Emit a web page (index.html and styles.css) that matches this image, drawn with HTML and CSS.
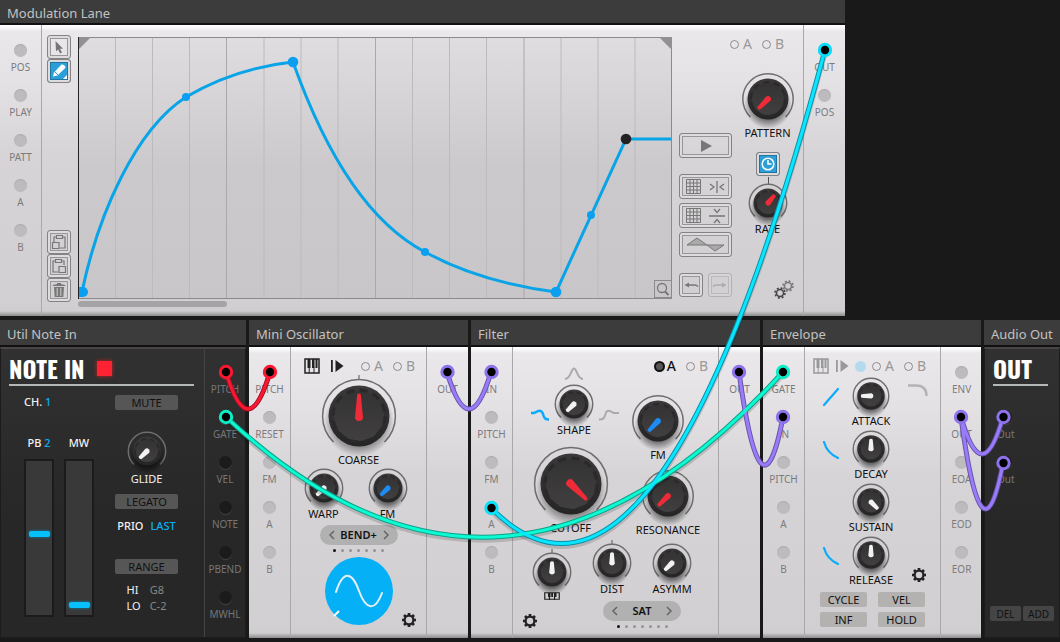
FILE: index.html
```html
<!DOCTYPE html>
<html lang="en">
<head>
<meta charset="utf-8">
<title>Modular Rack</title>
<link rel="stylesheet" href="styles.css">
</head>
<body>
<svg class="defs" aria-hidden="true">
  <defs>
    <linearGradient id="cap" x1="0" y1="0" x2="0" y2="1"><stop offset="0" stop-color="#3b3939"/><stop offset="1" stop-color="#262525"/></linearGradient>
    <linearGradient id="face" x1="0" y1="0" x2="0" y2="1"><stop offset="0" stop-color="#343333"/><stop offset="1" stop-color="#413f3f"/></linearGradient>
    <radialGradient id="shade"><stop offset="0.6" stop-color="#000" stop-opacity="0.5"/><stop offset="1" stop-color="#000" stop-opacity="0"/></radialGradient>
    <g id="dial-l">
      <path class="ring" d="M-25.500 26A36.400 36.400 0 1 1 25.500 26"/>
      <circle cy="6" r="35" fill="url(#shade)"/>
      <circle r="30.500" fill="url(#cap)"/>
      <circle r="25" fill="url(#face)"/>
      <circle r="26" fill="none" stroke="#2a2929" stroke-width="3" stroke-dasharray="8 5.600"/>
    </g>
    <g id="dial-m">
      <path class="ring" d="M-17.500 18A25.200 25.200 0 1 1 17.500 18"/>
      <circle cy="6" r="24" fill="url(#shade)"/>
      <circle r="20.500" fill="url(#cap)"/>
      <circle r="16" fill="url(#face)"/>
      <circle r="17" fill="none" stroke="#2a2929" stroke-width="2" stroke-dasharray="6 4.680"/>
    </g>
    <g id="dial-s">
      <path class="ring" d="M-13 13.500A18.700 18.700 0 1 1 13 13.500"/>
      <circle cy="5" r="18" fill="url(#shade)"/>
      <circle r="14.500" fill="url(#cap)"/>
      <circle r="11" fill="url(#face)"/>
      <circle r="12" fill="none" stroke="#2a2929" stroke-width="1.500" stroke-dasharray="5 3.380"/>
    </g>
    <path id="hand-l" d="M-1.800 -21.500Q0 -23.500 1.800 -21.500L4 2Q3.500 5 0 5Q-3.500 5 -4 2Z"/>
    <path id="hand-m" d="M-1.800 -13.500Q0 -15 1.800 -13.500L3 0.500Q2.500 3 0 3Q-2.500 3 -3 0.500Z"/>
    <path id="hand-s" d="M-1.800 -10Q0 -11.500 1.800 -10L2.800 0.500Q2 2.500 0 2.500Q-2 2.500 -2.800 0.500Z"/>
    <symbol id="keys" viewBox="0 0 16 16"><path d="M1 1H15V15H1Z" fill="none" stroke="currentColor" stroke-width="1.500"/><path d="M3.500 1H6.500V10H3.500ZM8 1H10.500V10H8ZM11.500 1H13.500V10H11.500Z" fill="currentColor"/><path d="M5.200 9V15M10 9V15" stroke="currentColor"/></symbol>
    <symbol id="keys-low" viewBox="0 0 16 8"><path d="M.75 .75H15.250V7.250H.75ZM5.500 4V8M10.500 4V8" fill="none" stroke="#222" stroke-width="1.200"/><path d="M4 1H6.500V5H4ZM7.200 1H9V5H7.200ZM10 1H12.500V5H10Z" fill="#222"/></symbol>
    <symbol id="step" viewBox="0 0 14 14"><path d="M1 1H2.800V13H1ZM5.500 1L13.500 7L5.500 13Z" fill="currentColor"/></symbol>
    <symbol id="gear" viewBox="-8 -8 16 16"><circle r="4.400" fill="none" stroke="currentColor" stroke-width="2.300"/><path d="M0 -7V-5M0 7V5M-7 0H-5M7 0H5M-5 -5L-3.600 -3.600M5 5L3.600 3.600M-5 5L-3.600 3.600M5 -5L3.600 -3.600" stroke="currentColor" stroke-width="2.700"/></symbol>
    <symbol id="grid" viewBox="0 0 15 15"><path d="M.5 .5H14.500V14.500H.5ZM4 0V15M7.500 0V15M11 0V15M0 4H15M0 7.500H15M0 11H15" fill="none" stroke="#777"/></symbol>
    <symbol id="fall" viewBox="0 0 18 18"><path d="M2 1Q5 12 16 17" fill="none" stroke="#0aabfc" stroke-width="2.200" stroke-linecap="round"/></symbol>
  </defs>
</svg>

<main class="rack">
  <div class="row row-top">
    <section class="module">
      <h2 class="title">Modulation Lane</h2>
      <div class="panel">
        <div class="ports">
          <button class="port"><i></i>POS</button><button class="port"><i></i>PLAY</button><button class="port"><i></i>PATT</button><button class="port"><i></i>A</button><button class="port"><i></i>B</button>
        </div>
        <div class="lane">
          <div class="tools">
            <button class="tool" aria-label="Select"><svg width="16" height="16" viewBox="0 0 16 16"><path d="M4.500 2L5 12.500L7.200 10.500L9 14.500L11 13.500L9 9.700H12Z" fill="#777"/></svg></button>
            <button class="tool on" aria-label="Draw"><svg width="18" height="18" viewBox="0 0 18 18"><path d="M3 14.500L4 10.500L11.500 2.500Q14.500 2 15.500 5.700L7.500 13.500Z" fill="#fff"/><path d="M4.500 9.500L8 13" stroke="#2b9fd8"/><path d="M17 13V17H13Z" fill="#fff"/></svg></button>
            <span class="spring"></span>
            <button class="tool" aria-label="Copy"><svg width="18" height="18" viewBox="0 0 18 18"><path d="M4 9V4H6M13 4H15V15H10M6.500 2.500H12.500V5.500H6.500ZM2.500 9.500H9V15.500H2.500Z" fill="none" stroke="#777" stroke-width="1.200"/></svg></button>
            <button class="tool" aria-label="Paste"><svg width="18" height="18" viewBox="0 0 18 18"><path d="M5 4H3V15H8M12 4H14V8M5.500 2.500H11.500V5.500H5.500ZM9 9.500H15.500V15.500H9Z" fill="none" stroke="#777" stroke-width="1.200"/></svg></button>
            <button class="tool" aria-label="Delete"><svg width="18" height="18" viewBox="0 0 18 18"><path d="M2.500 5Q3 3.500 7 3.300V2H11V3.300Q15 3.500 15.500 5ZM4 6H14L13.300 16H4.700Z" fill="#777"/><path d="M7.200 7V15M10.800 7V15" stroke="#d2d0d2"/></svg></button>
          </div>
          <div class="graph">
            <svg class="plot" viewBox="0 0 594 262" preserveAspectRatio="none">
              <path d="M37.500 0V261M74.500 0V261M111.500 0V261M186 0V261M223 0V261M260 0V261M334.500 0V261M371.500 0V261M408.500 0V261M483 0V261M520 0V261M557 0V261" stroke="#bcbabc"/>
              <path d="M148.500 0V261M297.500 0V261M446 0V261" stroke="#aaa8aa"/>
              <path d="M0 .5H594M593.500 0V261M0 261.500H594" stroke="#8c8b8c"/>
              <path d="M0 0H13L0 13ZM594 0H581L594 13Z" fill="#929192"/>
              <path d="M.5 0V262" stroke="#222"/>
              <g fill="none" stroke="#09a4e8" stroke-width="3">
                <path d="M4 255C20 178 57 93 108 60C142 40 177 29 215 25C247 115 290 185 347 215C389 238 432 249 478 255L548 102H593"/>
              </g>
              <path d="M1 250H5A5 5 0 0 1 5 260H1Z" fill="#0a9ff0"/>
              <g fill="#0a9ff0"><circle cx="108" cy="60" r="4"/><circle cx="215" cy="25" r="5.300"/><circle cx="347" cy="215" r="4"/><circle cx="478" cy="255" r="5.300"/><circle cx="513" cy="178" r="4"/></g>
              <circle cx="548" cy="102" r="5.300" fill="#222"/>
            </svg>
            <button class="zoom" aria-label="Zoom"><svg width="16" height="16" viewBox="0 0 16 16"><circle cx="7" cy="7" r="4.500" fill="none" stroke="#777" stroke-width="1.300"/><path d="M10 10.500L13.500 14" stroke="#777" stroke-width="2"/></svg></button>
            <div class="scroll"></div>
          </div>
          <div class="side">
            <div class="snap side-snap">
              <label><input type="radio" name="lane">A</label><label><input type="radio" name="lane">B</label>
            </div>
            <div class="actions">
              <button class="wide" aria-label="Play"><svg width="14" height="14" viewBox="0 0 14 14"><path d="M2 1L13 7L2 13Z" fill="#777"/></svg></button>
              <button class="wide" aria-label="Flip horizontally"><svg width="15" height="15"><use href="#grid"/></svg><svg width="18" height="16" viewBox="0 0 18 16"><path d="M2 5L6 8L2 11M16 5L12 8L16 11M9 2V14" fill="none" stroke="#777" stroke-width="1.300"/></svg></button>
              <button class="wide" aria-label="Flip vertically"><svg width="15" height="15"><use href="#grid"/></svg><svg width="18" height="16" viewBox="0 0 18 16"><path d="M6 1L9 4.500L12 1M6 15L9 11.500L12 15M1 8H17" fill="none" stroke="#777" stroke-width="1.300"/></svg></button>
              <button class="wide" aria-label="Invert shape"><svg width="42" height="18" viewBox="0 0 42 18"><path d="M2 9L12 2L22 9L30 15L39 9Z" fill="#aaa" stroke="#777"/></svg></button>
              <div class="history">
                <button class="tool" aria-label="Undo"><svg width="18" height="18" viewBox="0 0 18 18"><path d="M2.500 9L7 6.500V11.500Z" fill="#777"/><path d="M6 9H11Q14.500 8.500 16 10.500" fill="none" stroke="#777" stroke-width="1.500"/></svg></button>
                <button class="tool faint" aria-label="Redo"><svg width="18" height="18" viewBox="0 0 18 18"><path d="M15.500 9L11 6.500V11.500Z" fill="#777"/><path d="M12 9H7Q3.500 8.500 2 10.500" fill="none" stroke="#777" stroke-width="1.500"/></svg></button>
              </div>
            </div>
            <div class="dials">
              <label class="knob" style="--turn:-135deg"><svg class="dial" width="56" height="55" viewBox="-28 -28 56 55"><use href="#dial-m"/><use class="hand red" href="#hand-m"/></svg>PATTERN<input type="range"></label>
              <button class="tool on clock" aria-label="Clock sync"><svg width="18" height="18" viewBox="0 0 18 18"><circle cx="9" cy="9" r="5.800" fill="none" stroke="#fff" stroke-width="1.500"/><path d="M9 5V9H12.500" fill="none" stroke="#fff" stroke-width="1.500"/></svg></button>
              <label class="knob rate" style="--turn:40deg"><svg class="dial" width="44" height="40" viewBox="-22 -21 44 40"><path class="tick" d="M.5 -26V-19"/><use href="#dial-s"/><use class="hand red" href="#hand-s"/></svg>RATE<input type="range"></label>
              <span class="spring"></span>
              <svg class="gears" width="22" height="20" viewBox="0 0 22 20"><g fill="none" stroke="#777" stroke-width="1.500"><circle cx="15" cy="7" r="3.500"/><circle cx="15" cy="7" r="5" stroke-dasharray="2 1.927"/></g><g fill="none" stroke="#444" stroke-width="1.500"><circle cx="7" cy="14" r="3.500"/><circle cx="7" cy="14" r="5" stroke-dasharray="2 1.927"/></g></svg>
            </div>
          </div>
        </div>
        <div class="ports"><button class="port"><i></i>OUT</button><button class="port"><i></i>POS</button></div>
      </div>
    </section>
  </div>

  <div class="row row-bottom">
    <section class="module dark">
      <h2 class="title">Util Note In</h2>
      <div class="panel">
        <div class="note">
          <h3 class="brand">NOTE IN <i class="led"></i></h3>
          <div class="note-body">
            <div class="note-left">
              <p class="value">CH. <b>1</b></p>
              <div class="faders">
                <label class="fader"><span>PB <b>2</b></span><input type="range" min="0" max="100" value="53"></label>
                <label class="fader"><span>MW</span><input type="range" min="0" max="100" value="2"></label>
              </div>
            </div>
            <div class="note-right">
              <button class="flat">MUTE</button>
              <label class="knob glide" style="--turn:-135deg"><svg class="dial" width="44" height="40" viewBox="-22 -21 44 40"><use href="#dial-s"/><use class="hand white" href="#hand-s"/></svg>GLIDE<input type="range"></label>
              <button class="flat legato">LEGATO</button>
              <p class="value prio"><span>PRIO</span><b>LAST</b></p>
              <button class="flat">RANGE</button>
              <dl class="range"><dt>HI</dt><dd>G8</dd><dt>LO</dt><dd>C-2</dd></dl>
            </div>
          </div>
        </div>
        <div class="ports"><button class="port"><i></i>PITCH</button><button class="port"><i></i>GATE</button><button class="port"><i></i>VEL</button><button class="port"><i></i>NOTE</button><button class="port"><i></i>PBEND</button><button class="port"><i></i>MWHL</button></div>
      </div>
    </section>

    <section class="module">
      <h2 class="title">Mini Oscillator</h2>
      <div class="panel">
        <div class="ports"><button class="port"><i></i>PITCH</button><button class="port"><i></i>RESET</button><button class="port"><i></i>FM</button><button class="port"><i></i>A</button><button class="port"><i></i>B</button></div>
        <div class="body osc">
          <div class="modes">
            <svg width="16" height="16"><use href="#keys"/></svg><svg width="14" height="14"><use href="#step"/></svg>
            <div class="snap"><label><input type="radio" name="osc">A</label><label><input type="radio" name="osc">B</label></div>
          </div>
          <label class="knob" style="--turn:0deg"><svg class="dial" width="76" height="78" viewBox="-38 -41 76 78"><path class="tick" d="M0 -41V-36"/><use href="#dial-l"/><use class="hand red" href="#hand-l"/></svg>COARSE<input type="range"></label>
          <div class="pair">
            <label class="knob" style="--turn:-135deg"><svg class="dial" width="44" height="40" viewBox="-22 -21 44 40"><use href="#dial-s"/><use class="hand white" href="#hand-s"/></svg>WARP<input type="range"></label>
            <label class="knob" style="--turn:-135deg"><svg class="dial" width="44" height="40" viewBox="-22 -21 44 40"><use href="#dial-s"/><use class="hand blue" href="#hand-s"/></svg>FM<input type="range"></label>
          </div>
          <div class="pick">
            <button aria-label="Previous"><svg width="6" height="10" viewBox="0 0 6 10"><path d="M5 1L1 5L5 9"/></svg></button>BEND+<button aria-label="Next"><svg width="6" height="10" viewBox="0 0 6 10"><path d="M1 1L5 5L1 9"/></svg></button>
          </div>
          <div class="dots"><i class="now"></i><i></i><i></i><i></i><i></i><i></i><i></i></div>
          <div class="wave-row">
            <svg class="wave" width="68" height="68" viewBox="0 0 68 68"><circle cx="34" cy="34" r="34" fill="#05b0f7"/><path d="M11 35C18 13 27 14 34 34C41 53 50 55 57 36" fill="none" stroke="#e4f0f5" stroke-width="2" stroke-linecap="round"/><path d="M9 59L14 54" stroke="#fff" stroke-width="2"/></svg>
            <button class="cog" aria-label="Settings"><svg width="16" height="16"><use href="#gear"/></svg></button>
          </div>
        </div>
        <div class="ports"><button class="port"><i></i>OUT</button></div>
      </div>
    </section>

    <section class="module">
      <h2 class="title">Filter</h2>
      <div class="panel">
        <div class="ports"><button class="port"><i></i>IN</button><button class="port"><i></i>PITCH</button><button class="port"><i></i>FM</button><button class="port"><i></i>A</button><button class="port"><i></i>B</button></div>
        <div class="body filter">
          <div class="filter-top">
            <div class="filter-left">
              <div class="shape">
                <svg class="peak" width="20" height="13" viewBox="0 0 20 13"><path d="M1 12C7 12 7 1.500 10 1.500S13 12 19 12" fill="none" stroke="#aaa" stroke-width="2"/></svg>
                <svg class="curve" width="20" height="11" viewBox="0 0 20 11"><path d="M1 3H4C8 1 11 -1 13 4C14 8 15 9.500 19 9.500" fill="none" stroke="#0aabfc" stroke-width="2.500"/></svg>
                <label class="knob" style="--turn:-135deg"><svg class="dial" width="44" height="40" viewBox="-22 -21 44 40"><use href="#dial-s"/><use class="hand white" href="#hand-s"/></svg>SHAPE<input type="range"></label>
                <svg class="curve" width="22" height="11" viewBox="0 0 22 11"><path d="M1 9.500C6 9.500 6 8 7.500 4C9 -1 12 1 16 3H21" fill="none" stroke="#aaa" stroke-width="2"/></svg>
              </div>
              <label class="knob" style="--turn:135deg"><svg class="dial" width="76" height="78" viewBox="-38 -41 76 78"><use href="#dial-l"/><use class="hand red" href="#hand-l"/></svg>CUTOFF<input type="range"></label>
            </div>
            <div class="filter-right">
              <div class="snap"><label class="picked"><input type="radio" name="filter" checked>A</label><label><input type="radio" name="filter">B</label></div>
              <label class="knob fm" style="--turn:-137deg"><svg class="dial" width="56" height="55" viewBox="-28 -28 56 55"><use href="#dial-m"/><use class="hand blue" href="#hand-m"/></svg>FM<input type="range"></label>
              <label class="knob" style="--turn:-135deg"><svg class="dial" width="56" height="55" viewBox="-28 -28 56 55"><use href="#dial-m"/><use class="hand red" href="#hand-m"/></svg>RESONANCE<input type="range"></label>
            </div>
          </div>
          <div class="filter-low">
            <div class="track">
              <label class="knob" style="--turn:0deg"><svg class="dial" width="44" height="40" viewBox="-22 -21 44 40"><path class="tick" d="M0 -23V-19"/><use href="#dial-s"/><use class="hand white" href="#hand-s"/></svg><svg width="16" height="8"><use href="#keys-low"/></svg><input type="range" aria-label="Key tracking"></label>
              <button class="cog" aria-label="Settings"><svg width="16" height="16"><use href="#gear"/></svg></button>
            </div>
            <div class="drive">
              <div class="drive-pair">
                <label class="knob" style="--turn:0deg"><svg class="dial" width="44" height="40" viewBox="-22 -21 44 40"><path class="tick" d="M0 -23V-19"/><use href="#dial-s"/><use class="hand white" href="#hand-s"/></svg>DIST<input type="range"></label>
                <label class="knob" style="--turn:-135deg"><svg class="dial" width="44" height="40" viewBox="-22 -21 44 40"><use href="#dial-s"/><use class="hand white" href="#hand-s"/></svg>ASYMM<input type="range"></label>
              </div>
              <div class="pick"><button aria-label="Previous"><svg width="6" height="10" viewBox="0 0 6 10"><path d="M5 1L1 5L5 9"/></svg></button>SAT<button aria-label="Next"><svg width="6" height="10" viewBox="0 0 6 10"><path d="M1 1L5 5L1 9"/></svg></button></div>
              <div class="dots"><i class="now"></i><i></i><i></i><i></i><i></i><i></i><i></i></div>
            </div>
          </div>
        </div>
        <div class="ports"><button class="port"><i></i>OUT</button></div>
      </div>
    </section>

    <section class="module">
      <h2 class="title">Envelope</h2>
      <div class="panel">
        <div class="ports"><button class="port"><i></i>GATE</button><button class="port"><i></i>IN</button><button class="port"><i></i>PITCH</button><button class="port"><i></i>A</button><button class="port"><i></i>B</button></div>
        <div class="body env">
          <div class="modes off">
            <svg width="16" height="16"><use href="#keys"/></svg><svg width="14" height="14"><use href="#step"/></svg><i class="lamp"></i>
            <div class="snap"><label><input type="radio" name="env">A</label><label><input type="radio" name="env">B</label></div>
          </div>
          <div class="stages">
            <svg class="bend" width="18" height="18" viewBox="0 0 18 18"><path d="M2 17L16 1" stroke="#0aabfc" stroke-width="2.200" stroke-linecap="round"/></svg>
            <label class="knob" style="--turn:-90deg"><svg class="dial" width="44" height="40" viewBox="-22 -21 44 40"><use href="#dial-s"/><use class="hand white" href="#hand-s"/></svg>ATTACK<input type="range"></label>
            <svg class="knee" width="20" height="13" viewBox="0 0 20 13"><path d="M0 1.500H8Q18.500 1.500 18.500 12" fill="none" stroke="#b4b3b4" stroke-width="2.500"/></svg>
            <svg class="bend" width="18" height="18"><use href="#fall"/></svg>
            <label class="knob" style="--turn:0deg"><svg class="dial" width="44" height="40" viewBox="-22 -21 44 40"><use href="#dial-s"/><use class="hand white" href="#hand-s"/></svg>DECAY<input type="range"></label>
            <span></span><span></span>
            <label class="knob" style="--turn:135deg"><svg class="dial" width="44" height="40" viewBox="-22 -21 44 40"><use href="#dial-s"/><use class="hand white" href="#hand-s"/></svg>SUSTAIN<input type="range"></label>
            <span></span>
            <svg class="bend" width="18" height="18"><use href="#fall"/></svg>
            <label class="knob" style="--turn:0deg"><svg class="dial" width="44" height="40" viewBox="-22 -21 44 40"><use href="#dial-s"/><use class="hand white" href="#hand-s"/></svg>RELEASE<input type="range"></label>
            <button class="cog" aria-label="Settings"><svg width="16" height="16"><use href="#gear"/></svg></button>
          </div>
          <div class="switches"><button class="flat">CYCLE</button><button class="flat">VEL</button><button class="flat">INF</button><button class="flat">HOLD</button></div>
        </div>
        <div class="ports"><button class="port"><i></i>ENV</button><button class="port"><i></i>OUT</button><button class="port"><i></i>EOA</button><button class="port"><i></i>EOD</button><button class="port"><i></i>EOR</button></div>
      </div>
    </section>

    <section class="module dark">
      <h2 class="title">Audio Out</h2>
      <div class="panel out">
        <h3 class="brand">OUT</h3>
        <div class="out-ports"><button class="port"><i></i>Out</button><button class="port"><i></i>Out</button></div>
        <div class="out-buttons"><button class="flat">DEL</button><button class="flat">ADD</button></div>
      </div>
    </section>
  </div>

  <svg class="cables" viewBox="0 0 1060 642" preserveAspectRatio="none" aria-hidden="true">
    <g class="wires shadow"><path d="M226 420Q504 681 783 375"/><path d="M825 53Q658 679 491 511"/></g>
    <g class="wires edge">
      <path d="M226 372Q248 446 270 372" stroke="#a01226"/>
      <path d="M447 372Q469 446 491 372M739 372Q761 532 783 417M961 417Q982 491 1003 417M961 417Q982 574 1003 463" stroke="#6654a8"/>
      <path d="M226 417Q504 678 783 372" stroke="#0fa08a"/>
      <path d="M825 50Q658 676 491 508" stroke="#0990aa"/>
    </g>
    <g class="wires core">
      <path d="M226 372Q248 446 270 372" stroke="#fb1730"/>
      <path d="M447 372Q469 446 491 372M739 372Q761 532 783 417M961 417Q982 491 1003 417M961 417Q982 574 1003 463" stroke="#9a7cfa"/>
      <path d="M226 417Q504 678 783 372" stroke="#0dfbd2"/>
      <path d="M825 50Q658 676 491 508" stroke="#0be6ff"/>
    </g>
    <g class="plugs">
      <g stroke="#fb1730"><circle cx="226" cy="372" r="5.700"/><circle cx="270" cy="372" r="5.700"/></g>
      <g stroke="#8d72ec"><circle cx="447.500" cy="372" r="5.700"/><circle cx="491.500" cy="372" r="5.700"/><circle cx="739" cy="372" r="5.700"/><circle cx="783" cy="417" r="5.700"/><circle cx="961" cy="417" r="5.700"/><circle cx="1003.500" cy="417" r="5.700"/><circle cx="1003.500" cy="463" r="5.700"/></g>
      <g stroke="#0decc6"><circle cx="226" cy="417" r="5.700"/><circle cx="783" cy="372" r="5.700"/></g>
      <g stroke="#0be0fa"><circle cx="825" cy="50" r="5.700"/><circle cx="491.500" cy="508" r="5.700"/></g>
    </g>
  </svg>
</main>
</body>
</html>
```
FILE: styles.css
```css
* { box-sizing: border-box; }

body {
  margin: 0;
  background: #191919;
  color: #111;
  font: 11px/14px "Noto Sans", "Open Sans", sans-serif;
}

button {
  border: 0;
  padding: 0;
  background: none;
  color: inherit;
  font: inherit;
}

h2, h3, p, dl, dd { margin: 0; font-weight: normal; }
svg { display: block; flex: none; overflow: visible; }
.defs { position: absolute; width: 0; height: 0; }
.spring { flex: 1; }

/* Rack */
.rack {
  position: relative;
  display: flex;
  flex-direction: column;
  gap: 4px;
  padding-bottom: 4px;
}
.row { display: grid; gap: 3px; }
.row-top { grid-template-columns: minmax(0, 845fr) minmax(0, 212fr); }
.row-bottom { grid-template-columns: minmax(0, 246fr) minmax(0, 219fr) minmax(0, 289fr) minmax(0, 218fr) minmax(0, 76fr); }

.module { display: flex; flex-direction: column; background: #3c3c3c; }
.title {
  padding: 6px 7px 2px;
  border-bottom: 2px solid #111;
  background: #3c3c3c;
  color: #c2c2c2;
  font-size: 13px;
  line-height: 17px;
  white-space: nowrap;
}
.row-top .title { padding-top: 5px; padding-bottom: 1px; }
.panel {
  display: flex;
  flex: 1;
  min-height: 291px;
  background: linear-gradient(#fff 0, #f8f6f9 3px, #ebe8ec 6px, #e4e1e5 60px, #d6d4d6 130px, #d1cfd1 280px, #cfcdcf 286px, #8c8b8c 291px);
}
.dark .panel {
  border: 1px solid #1c1c1c;
  border-top: 2px solid #4a4646;
  background: linear-gradient(#313131, #272727 60%, #272727);
}

/* Jacks */
.ports {
  display: flex;
  flex: none;
  flex-direction: column;
  gap: 15px;
  width: 42px;
  padding-top: 19px;
}
.ports:first-child { border-right: 1px solid #a9a7a9; }
.ports:last-child { border-left: 1px solid #a9a7a9; }
.port {
  display: flex;
  flex-direction: column;
  align-items: center;
  gap: 3px;
  color: #7c7b7c;
  font-size: 10px;
}
.port i {
  width: 13px;
  height: 13px;
  border-radius: 50%;
  background: #bdbbbd;
  box-shadow: inset 0 1px 1px #aeacae;
}
.dark .ports { width: 41px; padding-top: 17px; border-color: #444; }
.dark .port { color: #777; }
.dark .port i { background: #1b1b1b; box-shadow: 0 1px 1px #444; }

/* Knobs */
.knob {
  position: relative;
  display: flex;
  flex-direction: column;
  align-items: center;
}
.knob input {
  position: absolute;
  inset: 0;
  width: 100%;
  height: 100%;
  margin: 0;
  opacity: 0;
}
.ring { fill: none; stroke: #6f6e6f; stroke-width: 1.5px; }
.tick { stroke: #555; }
.hand { transform: rotate(var(--turn)); }
.red { fill: #ee2b37; }
.white { fill: #f2f2f2; }
.blue { fill: #1d8cf2; }

/* Buttons */
.tool, .wide {
  display: flex;
  align-items: center;
  justify-content: center;
  height: 24px;
  border: 1px solid #848384;
  border-radius: 3px;
  box-shadow: inset 0 0 0 2px #dddbdd, inset 0 0 0 3px #989798;
}
.tool { width: 24px; }
.tool.on { background: #2b9fd8; box-shadow: inset 0 0 0 2px #dddbdd, inset 0 0 0 3px #2374a0; }
.faint { opacity: 0.4; }
.wide { width: 53px; height: 25px; gap: 7px; }
.flat {
  height: 15px;
  border-radius: 2px;
  background: #565656;
  color: #111;
}
.cog { width: 16px; height: 16px; color: #222; }

/* A and B choices */
.snap { display: flex; gap: 10px; color: #999; font-size: 14px; line-height: 18px; }
.snap label { display: flex; align-items: center; gap: 4px; }
.snap input {
  width: 9px;
  height: 9px;
  margin: 0;
  appearance: none;
  border: 1px solid #8c8b8c;
  border-radius: 50%;
}
.snap input:checked { width: 11px; height: 11px; border: 2px solid #111; background: #555; }
.snap .picked { gap: 2px; color: #111; font-weight: 500; }

.modes { display: flex; align-items: center; gap: 10px; color: #222; }
.modes.off { gap: 6px; color: #999; }
.modes .snap { margin-left: auto; }
.lamp { width: 11px; height: 11px; border-radius: 50%; background: #b3daed; }

.pick {
  display: flex;
  align-items: center;
  justify-content: space-between;
  width: 78px;
  height: 20px;
  padding: 0 9px;
  border-radius: 10px;
  background: #b2b1b2;
  font-weight: 600;
}
.pick path { fill: none; stroke: #666; stroke-width: 1.5px; }
.dots { display: flex; gap: 5px; padding: 4px 0 5px; }
.dots i { width: 3px; height: 3px; border-radius: 50%; background: #959495; }
.dots .now { background: #111; }

/* Modulation lane */
.lane { display: flex; flex: 1; padding: 10px 0 9px 5px; }
.tools { display: flex; flex-direction: column; height: 267px; }
.graph { position: relative; flex: 1; margin: 2px 7px 0; }
.plot {
  width: 100%;
  height: 262px;
  background: linear-gradient(#dfdddf, #cbc9cb 50%, #c8c6c8);
}
.zoom { position: absolute; top: 243px; right: 0; border: 1px solid #8c8b8c; width: 18px; height: 18px; }
.scroll { width: 25%; height: 6px; margin-top: 2px; border-radius: 3px; background: #a5a4a5; }
.side {
  display: grid;
  grid-template-columns: 53px 71px;
  grid-template-rows: 18px 246px;
}
.side-snap { grid-column: 1 / 3; justify-content: flex-end; padding-right: 19px; }
.actions { display: flex; flex-direction: column; gap: 4px; padding-top: 80px; }
.wide:first-child { margin-bottom: 12px; }
.history { display: flex; justify-content: space-between; margin-top: 12px; }
.dials { display: flex; flex-direction: column; align-items: center; padding-top: 18px; }
.clock { margin-top: 12px; }
.rate { margin-top: 6px; }
.gears { align-self: flex-end; margin-right: 8px; }

/* Note input */
.brand {
  display: flex;
  align-items: center;
  gap: 12px;
  height: 34px;
  border-bottom: 2px solid #b4b8b8;
  color: #fff;
  font: bold 24px/28px "Oswald", "Open Sans Condensed", "Roboto Condensed", "Liberation Sans Narrow", Roboto, sans-serif;
}
.led { width: 15px; height: 15px; background: #ff2233; box-shadow: 0 0 4px #c22; }
.note { flex: 1; padding: 3px 10px 0 8px; color: #f2f2f2; }
.note-body { display: flex; justify-content: space-between; padding: 9px 16px 0 15px; }
.value { font-weight: 500; white-space: pre; }
.value b, .fader b { color: #05b0f0; font-weight: 500; }
.faders { display: flex; gap: 10px; padding-top: 27px; font-weight: 500; }
.fader { display: flex; flex-direction: column; align-items: center; gap: 9px; width: 30px; white-space: nowrap; }
.fader input {
  width: 30px;
  height: 158px;
  margin: 0;
  padding: 4px 0;
  border: 2px solid #1b1b1b;
  background: #393939;
  appearance: none;
  writing-mode: vertical-lr;
  direction: rtl;
}
.fader input::-webkit-slider-thumb {
  width: 21px;
  height: 6px;
  border-radius: 2px;
  background: #05c0fb;
  box-shadow: 0 0 3px #058ab8;
  appearance: none;
}
.note-right { display: flex; flex-direction: column; align-items: center; }
.note-right .flat { width: 63px; }
.glide { gap: 2px; margin-top: 20px; }
.legato { margin-top: 8px; }
.prio { display: flex; gap: 7px; padding: 10px 0 26px; }
.range { display: grid; grid-template-columns: auto auto; gap: 2px 9px; padding-top: 9px; }
.range dd { color: #888; }

/* Module bodies */
.body { display: flex; flex: 1; flex-direction: column; align-items: center; padding-top: 10px; }
.modes { align-self: stretch; height: 18px; }
.osc .modes { padding: 0 11px 0 13px; }
.pair { display: flex; gap: 20px; padding-right: 6px; }
.osc .pick { margin-top: 4px; }
.wave-row { display: grid; grid-template-columns: 1fr auto 1fr; align-self: stretch; align-items: end; height: 71px; }
.wave { grid-column: 2; align-self: start; }
.wave-row .cog { justify-self: end; margin-right: 9px; }

.filter { align-items: stretch; }
.filter-top { display: flex; justify-content: space-between; }
.filter-left { display: flex; flex-direction: column; align-items: center; gap: 6px; width: 115px; padding-top: 10px; }
.shape { display: grid; grid-template-columns: 20px auto 22px; gap: 3px 2px; padding-left: 9px; }
.peak { grid-column: 2; justify-self: center; }
.curve { grid-column: auto; margin-top: 27px; }
.shape .curve:nth-child(2) { grid-column: 1; }
.filter-right { display: flex; flex-direction: column; align-items: center; gap: 6px; width: 90px; padding-right: 10px; }
.filter-right .snap { align-self: flex-end; }
.fm { margin-top: 12px; padding-right: 20px; }
.filter-low { display: flex; padding-top: 5px; }
.track { display: flex; flex-direction: column; width: 69px; padding: 9px 0 0 8px; }
.track .knob { gap: 1px; }
.track .cog { margin: 13px 0 0 1px; }
.drive { display: flex; flex-direction: column; align-items: center; width: 120px; }
.drive-pair { display: grid; grid-template-columns: 60px 60px; padding-bottom: 5px; }

.env .modes { padding: 0 14px 0 8px; }
.stages { display: grid; grid-template-columns: 44px 44px 1fr; gap: 1px 0; align-self: stretch; padding-top: 1px; }
.stages .knob { height: 52px; }
.stages .dial { height: 38px; }
.bend { justify-self: end; margin: 12px 9px 0 0; }
.knee { margin: 8px 0 0 15px; }
.stages .cog { align-self: end; margin: 0 0 4px 18px; }
.switches { display: grid; grid-template-columns: 47px 47px; gap: 5px 11px; padding-top: 5px; }
.env .flat { background: #b3b2b0; }

/* Audio output */
.out { flex-direction: column; padding: 3px 11px 0 8px; }
.out-ports { display: flex; flex-direction: column; align-items: flex-start; gap: 15px; padding-top: 25px; }
.out-ports .port { padding-left: 4px; }
.out-buttons { display: flex; gap: 2px; margin: auto -6px 16px -3px; }
.out-buttons .flat { flex: 1; font-size: 10px; background: #454545; }

/* Patch cables */
.cables { position: absolute; inset: 0; width: 100%; height: 100%; pointer-events: none; }
.wires { fill: none; }
.edge { stroke-width: 5px; }
.core { stroke-width: 3px; }
.shadow { stroke: #000; stroke-opacity: 0.15; stroke-width: 5px; }
.plugs { fill: #000; stroke-width: 3px; }
```
